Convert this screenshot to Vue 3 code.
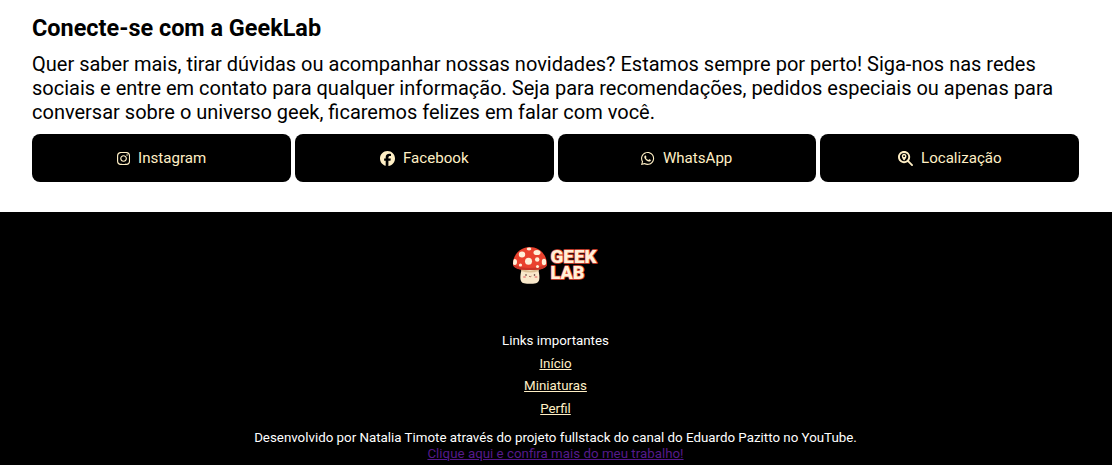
<script setup>
const socials = [
  {
    name: 'Instagram',
    box: '0 0 448 512',
    wide: false,
    path: 'M224.1 141c-63.6 0-114.9 51.3-114.9 114.9s51.3 114.9 114.9 114.9S339 319.5 339 255.9 287.7 141 224.1 141zm0 189.6c-41.1 0-74.7-33.5-74.7-74.7s33.5-74.7 74.7-74.7 74.7 33.5 74.7 74.7-33.6 74.7-74.7 74.7zm146.4-194.3c0 14.9-12 26.8-26.8 26.8-14.9 0-26.8-12-26.8-26.8s12-26.8 26.8-26.8 26.8 12 26.8 26.8zm76.1 27.2c-1.7-35.9-9.9-67.7-36.2-93.9-26.2-26.2-58-34.4-93.9-36.2-37-2.1-147.9-2.1-184.9 0-35.8 1.7-67.6 9.9-93.9 36.1s-34.4 58-36.2 93.9c-2.1 37-2.1 147.9 0 184.9 1.7 35.9 9.9 67.7 36.2 93.9s58 34.4 93.9 36.2c37 2.1 147.9 2.1 184.9 0 35.9-1.7 67.7-9.9 93.9-36.2 26.2-26.2 34.4-58 36.2-93.9 2.1-37 2.1-147.8 0-184.8zM398.8 388c-7.8 19.6-22.9 34.7-42.6 42.6-29.5 11.7-99.5 9-132.1 9s-102.7 2.6-132.1-9c-19.6-7.8-34.7-22.9-42.6-42.6-11.7-29.5-9-99.5-9-132.1s-2.6-102.7 9-132.1c7.8-19.6 22.9-34.7 42.6-42.6 29.5-11.7 99.5-9 132.1-9s102.7-2.6 132.1 9c19.6 7.8 34.7 22.9 42.6 42.6 11.7 29.5 9 99.5 9 132.1s2.7 102.7-9 132.1z',
  },
  {
    name: 'Facebook',
    box: '0 0 512 512',
    wide: true,
    path: 'M512 256C512 114.6 397.4 0 256 0S0 114.6 0 256C0 376 82.7 476.8 194.2 504.5V334.2H141.4V256h52.8V222.3c0-87.1 39.4-127.5 125-127.5c16.2 0 44.2 3.2 55.7 6.4V172c-6-.6-16.5-1-29.6-1c-42 0-58.2 15.9-58.2 57.2V256h83.6l-14.4 78.2H287V510.1C413.8 494.8 512 386.9 512 256z',
  },
  {
    name: 'WhatsApp',
    box: '0 0 448 512',
    wide: false,
    path: 'M380.9 97.1C339 55.1 283.2 32 223.9 32c-122.4 0-222 99.6-222 222 0 39.1 10.2 77.3 29.6 111L0 480l117.7-30.9c32.4 17.7 68.9 27 106.1 27h.1c122.3 0 224.1-99.6 224.1-222 0-59.3-25.2-115-67.1-157zm-157 341.6c-33.2 0-65.7-8.9-94-25.7l-6.7-4-69.8 18.3L72 359.2l-4.4-7c-18.5-29.4-28.2-63.3-28.2-98.2 0-101.7 82.8-184.5 184.6-184.5 49.3 0 95.6 19.2 130.4 54.1 34.8 34.9 56.2 81.2 56.1 130.5 0 101.8-84.9 184.6-186.6 184.6zm101.2-138.2c-5.5-2.8-32.8-16.2-37.9-18-5.1-1.9-8.8-2.8-12.5 2.8-3.7 5.6-14.3 18-17.6 21.8-3.2 3.7-6.5 4.2-12 1.4-32.6-16.3-54-29.1-75.5-66-5.7-9.8 5.7-9.1 16.3-30.3 1.8-3.7.9-6.9-.5-9.7-1.4-2.8-12.5-30.1-17.1-41.2-4.5-10.8-9.1-9.3-12.5-9.5-3.2-.2-6.9-.2-10.6-.2-3.7 0-9.7 1.4-14.8 6.9-5.1 5.6-19.4 19-19.4 46.3 0 27.3 19.9 53.7 22.6 57.4 2.8 3.7 39.1 59.7 94.8 83.8 35.2 15.2 49 16.5 66.6 13.9 10.7-1.6 32.8-13.4 37.4-26.4 4.6-13 4.6-24.1 3.2-26.4-1.3-2.5-5-3.9-10.5-6.6z',
  },
  {
    name: 'Localização',
    box: '0 0 512 512',
    wide: true,
    path: 'M416 208c0 45.9-14.9 88.3-40 122.7L502.6 457.4c12.5 12.5 12.5 32.8 0 45.3s-32.8 12.5-45.3 0L330.7 376c-34.4 25.2-76.8 40-122.7 40C93.1 416 0 322.9 0 208S93.1 0 208 0S416 93.1 416 208zM208 352a144 144 0 1 0 0-288 144 144 0 1 0 0 288zM288 176c0 48.8-46.6 111.6-68.6 138.6c-6 7.3-16.8 7.3-22.7 0c-22-27-68.6-89.9-68.6-138.6c0-44.2 35.8-80 80-80s80 35.8 80 80zm-48 0a32 32 0 1 0-64 0 32 32 0 1 0 64 0z',
  },
]

const links = ['Início', 'Miniaturas', 'Perfil']
</script>

<template>
  <main class="page">
    <section class="contact">
      <h2>Conecte-se com a GeekLab</h2>
      <p>
        Quer saber mais, tirar dúvidas ou acompanhar nossas novidades? Estamos sempre por perto! Siga-nos nas redes
        sociais e entre em contato para qualquer informação. Seja para recomendações, pedidos especiais ou apenas para
        conversar sobre o universo geek, ficaremos felizes em falar com você.
      </p>
      <nav class="socials">
        <a v-for="s in socials" :key="s.name" class="social">
          <svg :viewBox="s.box" :class="['icon', { wide: s.wide }]" aria-hidden="true">
            <path :d="s.path" fill="currentColor" fill-rule="evenodd" />
          </svg>
          <span>{{ s.name }}</span>
        </a>
      </nav>
    </section>

    <footer class="footer">
      <svg class="logo" viewBox="0 0 90 42" role="img" aria-label="Geek Lab">
        <defs>
          <clipPath id="cap">
            <path d="M3 20C3 10 11 3 19.500 3S36.500 9 37 20C37 25 29 26 20 26S3 25 3 20z" />
          </clipPath>
        </defs>
        <path d="M12 24C10 31 9 38.500 14 39.200Q20 40.200 26 39.200C31 38 29.500 31 28 24z" fill="#f9e8ca" />
        <path d="M11.500 24Q20 29.500 28.500 24L28.700 27Q20 30 11.300 27z" fill="#dcbf94" />
        <g clip-path="url(#cap)">
          <rect x="2" y="2" width="36" height="25" fill="#e9422e" />
          <path d="M2 20Q19 28 38 20V28H2z" fill="#c93527" />
          <g fill="#fff0d8">
            <ellipse cx="12" cy="10.500" rx="3.200" ry="3" />
            <ellipse cx="19" cy="5" rx="2.300" ry="1.400" />
            <ellipse cx="27" cy="8.500" rx="3.500" ry="2.600" />
            <circle cx="18.500" cy="17.300" r="3.500" />
            <circle cx="27.200" cy="15.500" r="2.200" />
            <ellipse cx="34" cy="18" rx="2.200" ry="3.200" />
            <ellipse cx="4.700" cy="18" rx="2.300" ry="2.900" />
            <circle cx="10.500" cy="21" r="1.600" />
            <circle cx="27.500" cy="22.500" r="1.500" />
          </g>
        </g>
        <g fill="#ee9a8e">
          <ellipse cx="14.500" cy="33" rx="1.600" ry="1" />
          <ellipse cx="26" cy="33" rx="1.600" ry="1" />
        </g>
        <g fill="#4a2524">
          <circle cx="16" cy="31" r=".8" />
          <circle cx="24.500" cy="31" r=".8" />
        </g>
        <path d="M19 32.200q1.200 1.200 2.400 0" stroke="#7c3932" stroke-width=".7" fill="none" />
        <g class="wordmark">
          <text x="40.500" y="18.700" textLength="46" lengthAdjust="spacingAndGlyphs">GEEK</text>
          <text x="40.500" y="35.200" textLength="34" lengthAdjust="spacingAndGlyphs">LAB</text>
        </g>
      </svg>
      <p class="title">Links importantes</p>
      <ul class="links">
        <li v-for="l in links" :key="l"><a>{{ l }}</a></li>
      </ul>
      <p class="credits">Desenvolvido por Natalia Timote através do projeto fullstack do canal do Eduardo Pazitto no YouTube.</p>
      <a class="work">Clique aqui e confira mais do meu trabalho!</a>
    </footer>
  </main>
</template>

<style>
body {
  margin: 0;
  background: #fff;
  overflow: hidden;
}
</style>

<style scoped>
.page {
  height: 465px;
  display: flex;
  flex-direction: column;
  overflow: hidden;
  font-family: Roboto, "Liberation Sans", sans-serif;
  color: #000;
}
.contact {
  box-sizing: border-box;
  height: 212px;
  flex: none;
  padding: 14px 33px 0 32px;
}
h2 {
  margin: 0 0 10px;
  font-size: 23.45px;
  line-height: 28px;
  font-weight: 700;
}
.contact p {
  margin: 0 0 10px;
  font-size: 20px;
  line-height: 24px;
}
.socials {
  display: grid;
  grid-template-columns: repeat(4, 1fr);
  gap: 4px;
}
.social {
  height: 48px;
  display: flex;
  align-items: center;
  justify-content: center;
  gap: 8.4px;
  border-radius: 8px;
  background: #000;
  color: #ffefc5;
  font-size: 15.1px;
  line-height: 18px;
}
.icon {
  width: 13.125px;
  height: 15px;
}
.icon.wide {
  width: 15px;
}
.footer {
  flex: 1;
  display: flex;
  flex-direction: column;
  align-items: center;
  padding-right: 1px;
  background: #000;
  color: #fff;
  font-size: 13.33px;
  line-height: 16px;
}
.logo {
  width: 90px;
  height: 42px;
  margin: 32px 1px 47px 0;
}
.wordmark {
  font-family: Roboto, sans-serif;
  font-size: 18.5px;
  font-weight: 900;
  fill: #fff0d8;
  stroke: #dc4835;
  stroke-width: 1.7px;
  stroke-linejoin: round;
  paint-order: stroke;
}
.title {
  margin: 0 0 7px;
}
.links {
  margin: 0 0 13px;
  padding: 0;
  list-style: none;
  display: grid;
  gap: 6.4px;
  text-align: center;
}
.links a {
  color: #ffefc5;
  text-decoration: underline;
}
.credits {
  margin: 0;
}
.work {
  color: #551a8b;
  text-decoration: underline;
}
</style>
